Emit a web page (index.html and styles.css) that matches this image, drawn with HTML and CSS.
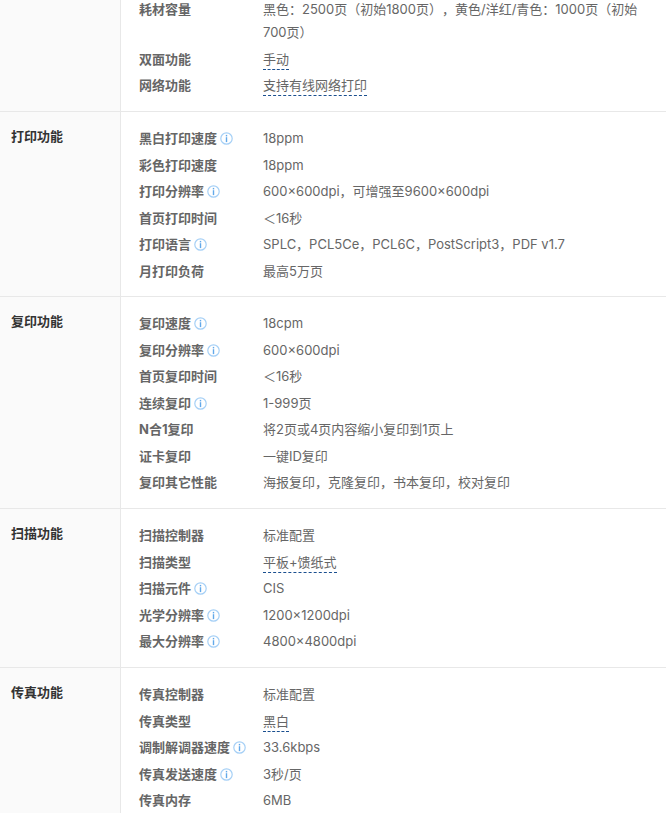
FILE: index.html
```html
<!DOCTYPE html>
<html lang="zh-CN">
<head>
<meta charset="utf-8">
<title>参数</title>
<link rel="stylesheet" href="styles.css">
</head>
<body>
<svg class="sprite" width="0" height="0" aria-hidden="true">
  <symbol id="info" viewBox="0 0 13 13">
    <circle cx="6.5" cy="6.5" r="5.7" fill="none" stroke="#a6d0f6" stroke-width="1.2"/>
    <rect x="5.8" y="2.9" width="1.4" height="1.5" fill="#62a9ea"/>
    <rect x="5.8" y="5.2" width="1.4" height="4.9" fill="#62a9ea"/>
  </symbol>
</svg>
<main class="specs">
  <section class="group group-first">
    <h3 class="group-title"></h3>
    <div class="rows">
      <div class="row"><span class="label">耗材容量</span><span class="value">黑色：2500页（初始1800页），黄色/洋红/青色：1000页（初始700页）</span></div>
      <div class="row"><span class="label">双面功能</span><span class="value"><span class="term">手动</span></span></div>
      <div class="row"><span class="label">网络功能</span><span class="value"><span class="term">支持有线网络打印</span></span></div>
    </div>
  </section>
  <section class="group">
    <h3 class="group-title">打印功能</h3>
    <div class="rows">
      <div class="row"><span class="label">黑白打印速度<svg class="info"><use href="#info"/></svg></span><span class="value">18ppm</span></div>
      <div class="row"><span class="label">彩色打印速度</span><span class="value">18ppm</span></div>
      <div class="row"><span class="label">打印分辨率<svg class="info"><use href="#info"/></svg></span><span class="value">600×600dpi，可增强至9600×600dpi</span></div>
      <div class="row"><span class="label">首页打印时间</span><span class="value">＜16秒</span></div>
      <div class="row"><span class="label">打印语言<svg class="info"><use href="#info"/></svg></span><span class="value">SPLC，PCL5Ce，PCL6C，PostScript3，PDF v1.7</span></div>
      <div class="row"><span class="label">月打印负荷</span><span class="value">最高5万页</span></div>
    </div>
  </section>
  <section class="group">
    <h3 class="group-title">复印功能</h3>
    <div class="rows">
      <div class="row"><span class="label">复印速度<svg class="info"><use href="#info"/></svg></span><span class="value">18cpm</span></div>
      <div class="row"><span class="label">复印分辨率<svg class="info"><use href="#info"/></svg></span><span class="value">600×600dpi</span></div>
      <div class="row"><span class="label">首页复印时间</span><span class="value">＜16秒</span></div>
      <div class="row"><span class="label">连续复印<svg class="info"><use href="#info"/></svg></span><span class="value">1-999页</span></div>
      <div class="row"><span class="label">N合1复印</span><span class="value">将2页或4页内容缩小复印到1页上</span></div>
      <div class="row"><span class="label">证卡复印</span><span class="value">一键ID复印</span></div>
      <div class="row"><span class="label">复印其它性能</span><span class="value">海报复印，克隆复印，书本复印，校对复印</span></div>
    </div>
  </section>
  <section class="group">
    <h3 class="group-title">扫描功能</h3>
    <div class="rows">
      <div class="row"><span class="label">扫描控制器</span><span class="value">标准配置</span></div>
      <div class="row"><span class="label">扫描类型</span><span class="value"><span class="term">平板+馈纸式</span></span></div>
      <div class="row"><span class="label">扫描元件<svg class="info"><use href="#info"/></svg></span><span class="value">CIS</span></div>
      <div class="row"><span class="label">光学分辨率<svg class="info"><use href="#info"/></svg></span><span class="value">1200×1200dpi</span></div>
      <div class="row"><span class="label">最大分辨率<svg class="info"><use href="#info"/></svg></span><span class="value">4800×4800dpi</span></div>
    </div>
  </section>
  <section class="group">
    <h3 class="group-title">传真功能</h3>
    <div class="rows">
      <div class="row"><span class="label">传真控制器</span><span class="value">标准配置</span></div>
      <div class="row"><span class="label">传真类型</span><span class="value"><span class="term">黑白</span></span></div>
      <div class="row"><span class="label">调制解调器速度<svg class="info"><use href="#info"/></svg></span><span class="value">33.6kbps</span></div>
      <div class="row"><span class="label">传真发送速度<svg class="info"><use href="#info"/></svg></span><span class="value">3秒/页</span></div>
      <div class="row"><span class="label">传真内存</span><span class="value">6MB</span></div>
    </div>
  </section>
</main>
</body>
</html>
```
FILE: styles.css
```css
html, body {
  margin: 0;
  padding: 0;
  height: 813px;
  overflow: hidden;
  background: #fff;
}
body {
  font-family: "Inter", "Noto Sans CJK SC", sans-serif;
  font-size: 13px;
  color: #666;
  text-spacing-trim: space-all;
}
.sprite {
  display: block;
  height: 0;
}
.specs {
  margin-top: -2px;
}
.group {
  display: grid;
  grid-template-columns: 121px 1fr;
  border-bottom: 1px solid #e8e8e8;
}
.group-title {
  margin: 0;
  padding: 13px 0 0 11px;
  background: #fafafa;
  border-right: 1px solid #e8e8e8;
  font-size: 13px;
  line-height: 23px;
  font-weight: 700;
  color: #333;
}
.rows {
  padding: 15px 16px 10px 18px;
}
.group-first .rows {
  padding-top: 0;
}
.row {
  display: grid;
  grid-template-columns: 124px 1fr;
  padding-bottom: 3px;
  line-height: 23px;
}
.row:nth-child(odd) {
  padding-bottom: 4px;
}
.label {
  font-weight: 700;
  color: #666;
}
.info {
  width: 13px;
  height: 13px;
  margin-left: 3px;
  vertical-align: -2px;
}
.term {
  display: inline-block;
  line-height: 19px;
  border-bottom: 1px dashed #1a4f8f;
}
```
